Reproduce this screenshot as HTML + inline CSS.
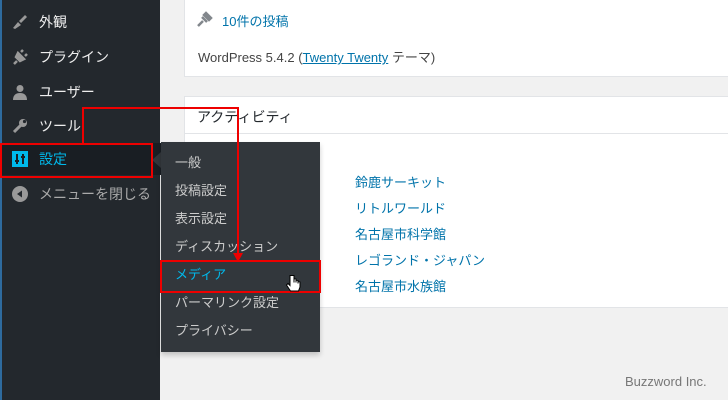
<!DOCTYPE html>
<html><head><meta charset="utf-8"><style>
*{margin:0;padding:0;box-sizing:border-box}
body{width:728px;height:400px;overflow:hidden;background:#f1f1f1;font-family:"Liberation Sans","Noto Sans CJK JP",sans-serif;position:relative}
.abs{position:absolute}
#side{left:0;top:0;width:160px;height:400px;background:#23282d;border-left:2px solid #2e6b9e}
.mi{position:absolute;left:37px;font-size:14px;color:#eee;line-height:20px}
.ic{position:absolute;left:10px;width:16px;height:16px}
.card{background:#fff;border:1px solid #e2e4e7}
.sub{left:161px;top:142px;width:159px;height:210px;background:#32373c;box-shadow:0 3px 5px rgba(0,0,0,.2)}
.si{position:absolute;left:14px;font-size:13px;color:#ccc;line-height:18px}
.lk{position:absolute;left:355px;font-size:13px;color:#0073aa;line-height:18px}
.red{position:absolute;border:2px solid #e00}
.rl{position:absolute;background:#e00}
</style></head><body>
<div id="side" class="abs">
<svg class="ic" style="top:14px" viewBox="0 0 16 16"><path d="M1 14l5-6 3 3-6 4zM7 7l6-6 2 2-6 6z" fill="#999"/></svg>
<div class="mi" style="top:12px">外観</div>
<svg class="ic" style="top:49px" viewBox="0 0 16 16"><path d="M2 15l3-3M4 8l4 4 4-2-6-6zM9 3l2-2M13 7l2-2" stroke="#999" stroke-width="2.5" fill="#999"/></svg>
<div class="mi" style="top:47px">プラグイン</div>
<svg class="ic" style="top:84px" viewBox="0 0 16 16"><circle cx="8" cy="4.5" r="3.5" fill="#999"/><path d="M1 16c0-5 3-7 7-7s7 2 7 7z" fill="#999"/></svg>
<div class="mi" style="top:82px">ユーザー</div>
<svg class="ic" style="top:118px" viewBox="0 0 16 16"><path d="M2 14l7-7" stroke="#999" stroke-width="3"/><circle cx="11" cy="5" r="4" fill="#999"/><circle cx="12.5" cy="3.5" r="1.6" fill="#23282d"/></svg>
<div class="mi" style="top:116px">ツール</div>
<div class="abs" style="left:-2px;top:143px;width:162px;height:32px;background:#191e23"></div>
<svg class="ic" style="top:151px" viewBox="0 0 16 16"><rect width="16" height="16" fill="#00b9eb"/><path d="M5 3v10M11 3v10M3 10h4M9 6h4" stroke="#191e23" stroke-width="2"/></svg>
<div class="mi" style="top:149px;color:#00b9eb">設定</div>
<svg class="ic" style="top:186px" viewBox="0 0 16 16"><circle cx="8" cy="8" r="8" fill="#999"/><path d="M10 4.5v7L5 8z" fill="#23282d"/></svg>
<div class="mi" style="top:184px;color:#aaa">メニューを閉じる</div>
</div>
<div class="abs" style="left:152px;top:152px;width:0;height:0;border-top:8px solid transparent;border-bottom:8px solid transparent;border-right:9px solid #32373c"></div>
<div class="abs card" style="left:184px;top:-2px;width:560px;height:79px">
<svg class="abs" style="left:12px;top:12px" width="16" height="16" viewBox="0 0 16 16"><path d="M1 15l5-5M5 6l5 5M7 4l5 5 2-2-5-5z" stroke="#82878c" stroke-width="2.5" fill="#82878c"/></svg>
<div class="abs" style="left:37px;top:12px;font-size:13px;color:#0073aa">10件の投稿</div>
<div class="abs" style="left:13px;top:48px;font-size:13px;color:#444">WordPress 5.4.2 (<u style="color:#0073aa">Twenty Twenty</u> テーマ)</div>
</div>
<div class="abs card" style="left:184px;top:96px;width:560px;height:212px">
<div class="abs" style="left:12px;top:10px;font-size:14px;color:#23282d">アクティビティ</div>
<div class="abs" style="left:0;top:36px;width:100%;height:1px;background:#e2e4e7"></div>
</div>
<div class="lk" style="top:174px">鈴鹿サーキット</div>
<div class="lk" style="top:200px">リトルワールド</div>
<div class="lk" style="top:226px">名古屋市科学館</div>
<div class="lk" style="top:252px">レゴランド・ジャパン</div>
<div class="lk" style="top:278px">名古屋市水族館</div>
<div class="abs sub">
<div class="si" style="top:12px">一般</div>
<div class="si" style="top:40px">投稿設定</div>
<div class="si" style="top:68px">表示設定</div>
<div class="si" style="top:96px">ディスカッション</div>
<div class="si" style="top:124px;color:#00b9eb">メディア</div>
<div class="si" style="top:152px">パーマリンク設定</div>
<div class="si" style="top:180px">プライバシー</div>
</div>
<div class="red" style="left:0;top:143px;width:153px;height:35px"></div>
<div class="red" style="left:160px;top:260px;width:161px;height:33px"></div>
<div class="rl" style="left:82px;top:107px;width:2px;height:37px"></div>
<div class="rl" style="left:82px;top:107px;width:157px;height:2px"></div>
<div class="rl" style="left:237px;top:107px;width:2px;height:148px"></div>
<div class="abs" style="left:233px;top:253px;width:0;height:0;border-left:5px solid transparent;border-right:5px solid transparent;border-top:9px solid #e00"></div>
<svg class="abs" style="left:286px;top:274px" width="16" height="20" viewBox="0 0 16 20"><path d="M4 1.5v10l-2-2-1.5 1.5 4 6h8l1.5-4v-5l-2-.5v2-3l-2-.5v2.5-3.5l-2-.5v4V1.5z" fill="#fff" stroke="#000" stroke-width="1"/></svg>
<div class="abs" style="left:625px;top:374px;font-size:13px;color:#777">Buzzword Inc.</div>
</body></html>
